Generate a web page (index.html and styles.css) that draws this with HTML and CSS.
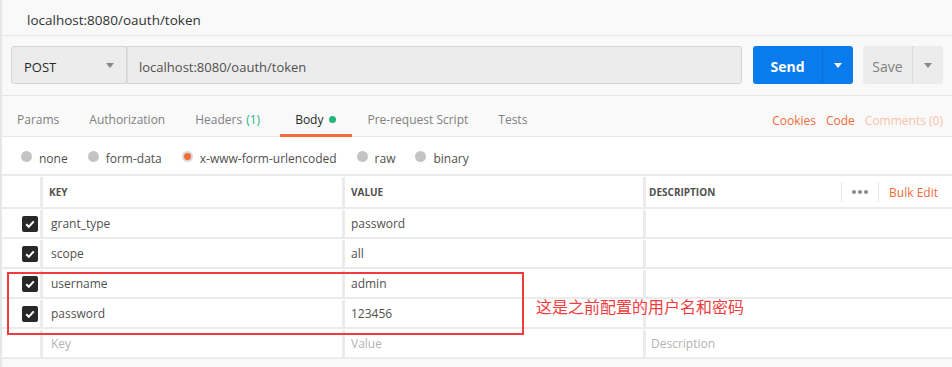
FILE: index.html
```html
<!DOCTYPE html>
<html lang="en">
<head>
  <meta charset="UTF-8">
  <title>localhost:8080/oauth/token</title>
  <link rel="stylesheet" href="styles.css">
</head>
<body>
  <div class="app">
    <div class="title-bar">localhost:8080/oauth/token</div>

    <div class="request-bar">
      <div class="method">
        <span>POST</span>
        <span class="caret caret-gray"></span>
      </div>
      <div class="url">localhost:8080/oauth/token</div>
      <div class="send">
        <span class="send-label">Send</span>
        <span class="send-menu"><span class="caret caret-white"></span></span>
      </div>
      <div class="save">
        <span class="save-label">Save</span>
        <span class="save-menu"><span class="caret caret-gray"></span></span>
      </div>
    </div>

    <div class="tabs">
      <div class="tab">Params</div>
      <div class="tab">Authorization</div>
      <div class="tab">Headers <span class="count">(1)</span></div>
      <div class="tab active">Body <span class="dot"></span></div>
      <div class="tab">Pre-request Script</div>
      <div class="tab">Tests</div>
      <div class="tab-links">
        <span class="link">Cookies</span>
        <span class="link">Code</span>
        <span class="link faded">Comments (0)</span>
      </div>
    </div>

    <div class="body-types">
      <label class="radio"><span class="circle"></span>none</label>
      <label class="radio"><span class="circle"></span>form-data</label>
      <label class="radio"><span class="circle checked"></span>x-www-form-urlencoded</label>
      <label class="radio"><span class="circle"></span>raw</label>
      <label class="radio"><span class="circle"></span>binary</label>
    </div>

    <div class="table">
      <div class="row head">
        <div class="cell check"></div>
        <div class="cell">KEY</div>
        <div class="cell">VALUE</div>
        <div class="cell desc-head">
          <span>DESCRIPTION</span>
          <span class="head-tools">
            <span class="more"><i></i><i></i><i></i></span>
            <span class="bulk">Bulk Edit</span>
          </span>
        </div>
      </div>
      <div class="row">
        <div class="cell check"><span class="box"><svg width="12" height="12" viewBox="0 0 12 12"><path d="M2.2 6.3 L4.8 8.8 L9.8 3.4" fill="none" stroke="#fff" stroke-width="2"/></svg></span></div>
        <div class="cell">grant_type</div>
        <div class="cell">password</div>
        <div class="cell"></div>
      </div>
      <div class="row">
        <div class="cell check"><span class="box"><svg width="12" height="12" viewBox="0 0 12 12"><path d="M2.2 6.3 L4.8 8.8 L9.8 3.4" fill="none" stroke="#fff" stroke-width="2"/></svg></span></div>
        <div class="cell">scope</div>
        <div class="cell">all</div>
        <div class="cell"></div>
      </div>
      <div class="row">
        <div class="cell check"><span class="box"><svg width="12" height="12" viewBox="0 0 12 12"><path d="M2.2 6.3 L4.8 8.8 L9.8 3.4" fill="none" stroke="#fff" stroke-width="2"/></svg></span></div>
        <div class="cell">username</div>
        <div class="cell">admin</div>
        <div class="cell"></div>
      </div>
      <div class="row">
        <div class="cell check"><span class="box"><svg width="12" height="12" viewBox="0 0 12 12"><path d="M2.2 6.3 L4.8 8.8 L9.8 3.4" fill="none" stroke="#fff" stroke-width="2"/></svg></span></div>
        <div class="cell">password</div>
        <div class="cell">123456</div>
        <div class="cell"></div>
      </div>
      <div class="row">
        <div class="cell check"></div>
        <div class="cell placeholder">Key</div>
        <div class="cell placeholder">Value</div>
        <div class="cell placeholder">Description</div>
      </div>

      <div class="note-box"></div>
      <div class="note">这是之前配置的用户名和密码</div>
    </div>
  </div>
</body>
</html>
```

FILE: styles.css
```css
body {
  margin: 0;
  background: #f9f9f9;
  font-family: "Open Sans", "Noto Sans", sans-serif;
  color: #505050;
}
.app {
  border-left: 2px solid #e6e6e6;
  height: 367px;
  box-sizing: border-box;
}
.title-bar {
  height: 35px;
  line-height: 41px;
  padding-left: 25px;
  font-size: 13.5px;
  color: #333;
  border-bottom: 1px solid #e6e6e6;
}
.request-bar {
  display: flex;
  height: 60px;
  box-sizing: border-box;
  padding: 10px 9px 11px 9px;
  border-bottom: 1px solid #e6e6e6;
}
.method {
  width: 116px;
  box-sizing: border-box;
  display: flex;
  align-items: center;
  justify-content: space-between;
  padding: 3px 12px 0 12px;
  background: #ececec;
  border: 1px solid #d6d6d6;
  border-radius: 3px 0 0 3px;
  font-size: 13px;
  color: #282828;
}
.method .caret {
  margin-top: -3px;
}
.url {
  width: 615px;
  box-sizing: border-box;
  display: flex;
  align-items: center;
  padding: 3px 0 0 11px;
  background: #ececec;
  border: 1px solid #d6d6d6;
  border-left: 1px solid #dcdcdc;
  border-radius: 0 3px 3px 0;
  font-size: 13px;
  color: #505050;
}
.caret {
  display: inline-block;
  width: 0;
  height: 0;
  border-left: 4px solid transparent;
  border-right: 4px solid transparent;
}
.caret-gray {
  border-top: 5px solid #888;
}
.caret-white {
  border-top: 5px solid #fff;
}
.send {
  display: flex;
  width: 100px;
  margin-left: 11px;
  background: #097bed;
  border-radius: 3px;
  color: #fff;
}
.send-label {
  width: 69px;
  display: flex;
  align-items: center;
  justify-content: center;
  font-size: 14px;
  font-weight: bold;
  padding-top: 3px;
  border-right: 1px solid #0a6fd6;
}
.send-menu, .save-menu {
  flex: 1;
  display: flex;
  align-items: center;
  justify-content: center;
}
.save {
  display: flex;
  width: 80px;
  margin-left: 10px;
  background: #ececec;
  border-radius: 3px;
  color: #808080;
}
.save-label {
  width: 49px;
  display: flex;
  align-items: center;
  justify-content: center;
  font-size: 14px;
  padding-top: 3px;
  border-right: 1px solid #dcdcdc;
}
.tabs {
  display: flex;
  height: 41px;
  box-sizing: border-box;
  border-bottom: 1px solid #e6e6e6;
  font-size: 12px;
}
.tab {
  display: flex;
  align-items: center;
  padding: 9px 15px 0 15px;
  color: #808080;
  border-bottom: 3px solid transparent;
  margin-bottom: -1px;
  box-sizing: border-box;
}
.tab .count {
  color: #26b47f;
  margin-left: 4px;
}
.tab.active {
  color: #282828;
  margin-left: 5px;
  padding-right: 16px;
  border-bottom-color: #f26b3a;
}
.tab .dot {
  width: 7px;
  height: 7px;
  border-radius: 50%;
  background: #26b47f;
  margin-left: 6px;
}
.tab-links {
  margin-left: auto;
  display: flex;
  align-items: center;
  gap: 10px;
  padding: 8px 9px 0 0;
}
.link {
  color: #f26b3a;
}
.link.faded {
  color: #f8c2a9;
}
.body-types {
  display: flex;
  align-items: center;
  height: 37px;
  box-sizing: border-box;
  padding: 5px 0 0 19px;
  background: #fff;
  font-size: 12px;
  gap: 20px;
  color: #505050;
}
.radio {
  display: flex;
  align-items: center;
}
.circle {
  width: 11px;
  height: 11px;
  border-radius: 50%;
  background: #c4c4c4;
  margin-right: 7px;
  margin-top: -3px;
  box-sizing: border-box;
}
.circle.checked {
  background: #f26b3a;
  border: 2px solid #d9d9d9;
}
.table {
  position: relative;
  background: #fff;
  border-top: 2px solid #ebebeb;
}
.row {
  display: grid;
  grid-template-columns: 41px 302px 301px 1fr;
  height: 30px;
  box-sizing: border-box;
  padding-top: 1px;
  border-bottom: 2px solid #ebebeb;
  font-size: 12px;
}
.row.head {
  height: 33px;
  font-size: 10px;
  font-weight: bold;
  color: #505050;
}
.cell {
  display: flex;
  align-items: center;
  padding-left: 8px;
  border-right: 3px solid #ebebeb;
}
.row .cell:nth-child(3) {
  padding-left: 6px;
}
.head .cell {
  padding-left: 6px;
}
.cell:last-child {
  border-right: none;
  padding-left: 5px;
}
.head .cell:last-child {
  padding-left: 3px;
}
.cell.check {
  justify-content: flex-end;
  padding: 0 2px 0 0;
}
.box {
  width: 16px;
  height: 16px;
  border-radius: 2px;
  background: #282828;
  display: flex;
  align-items: center;
  justify-content: center;
}
.placeholder {
  color: #b3b3b3;
}
.desc-head {
  justify-content: space-between;
}
.head-tools {
  display: flex;
  align-items: center;
  height: 20px;
}
.more {
  display: flex;
  align-items: center;
  gap: 2px;
  height: 20px;
  padding: 0 10px;
  border-left: 1px solid #e6e6e6;
  border-right: 1px solid #e6e6e6;
}
.more i {
  width: 4px;
  height: 4px;
  border-radius: 50%;
  background: #888;
}
.bulk {
  font-size: 12px;
  font-weight: normal;
  color: #f26b3a;
  padding: 0 14px 0 10px;
}
.note-box {
  position: absolute;
  left: 5px;
  top: 96px;
  width: 513px;
  height: 59px;
  border: 2px solid #f03c3c;
}
.note {
  position: absolute;
  left: 534px;
  top: 118px;
  font-size: 16px;
  color: #f03c3c;
  font-family: "Noto Sans CJK SC", sans-serif;
}
```
